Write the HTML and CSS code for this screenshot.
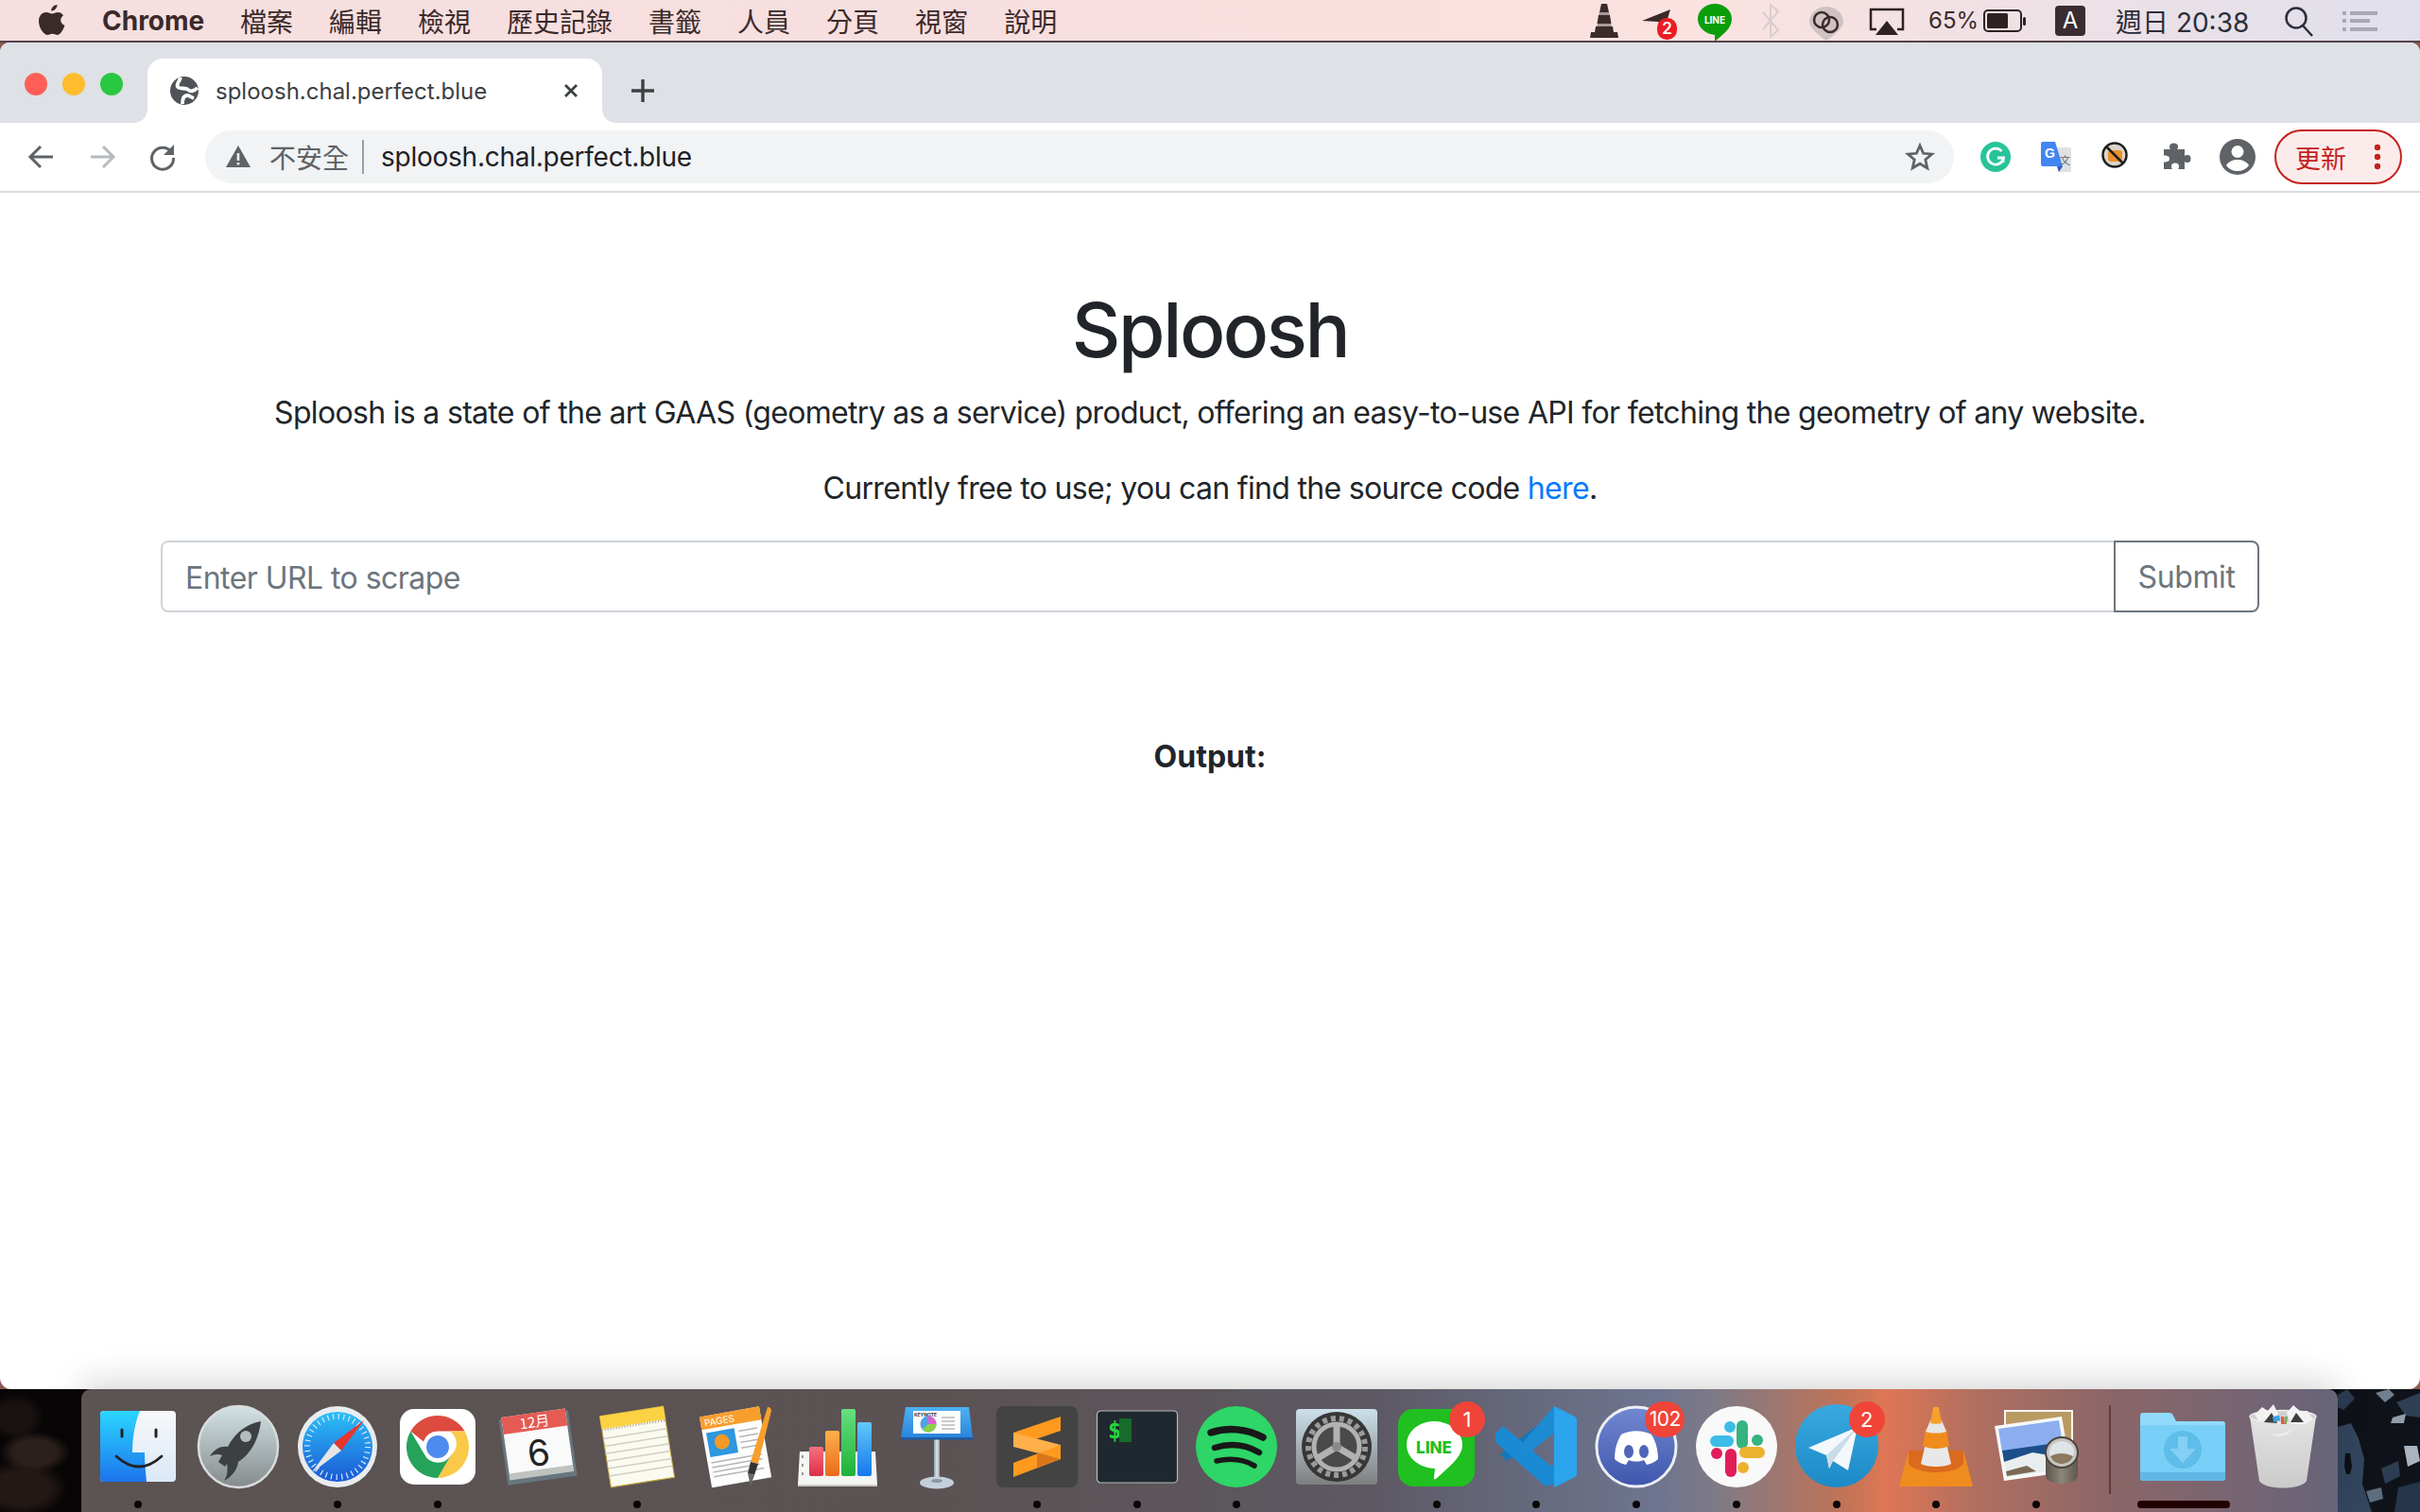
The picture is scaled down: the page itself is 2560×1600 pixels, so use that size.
FILE: index.html
```html
<!DOCTYPE html>
<html lang="zh-Hant">
<head>
  <meta charset="UTF-8">
  <title>Sploosh</title>
  <link rel="stylesheet" href="styles.css">
</head>
<body>
  <header class="menubar">
    <svg class="apple" width="30" height="34" viewBox="0 0 30 34"><path fill="#3b2a2a" d="M20.5 0c.3 3-2.700 6.800-6.300 6.500C13.800 3.400 17 .3 20.500 0zM27 11.500c-4.200 2.500-3.500 8.500 1.500 10.500-1.500 4-4.500 10-8 10-1.800 0-3-1.200-5-1.200s-3.300 1.200-5 1.200C6.500 32 1 24.500 1 17.500 1 11 5 8 9 8c2.300 0 4.300 1.500 6 1.500S19 8 21.500 8c2 0 4.200 1 5.500 3.500z"/></svg>
    <span class="app-name">Chrome</span>
    <nav class="menus">
      <span>檔案</span><span>編輯</span><span>檢視</span><span>歷史記錄</span><span>書籤</span><span>人員</span><span>分頁</span><span>視窗</span><span>說明</span>
    </nav>
    <div class="status">
      <svg width="56" height="44" viewBox="0 0 56 44"><path fill="#3b2a2a" d="M25 4h6l2 9H23zM22 16h12l1.500 9h-15zM19 28h18l1 6h4l1 6H13l1-6h4z"/><path fill="#a89a9a" d="M23 13h10l1 3H22zM21 25h14l1 3H20z"/></svg>
      <div class="status-slot plane">
        <svg width="60" height="44" viewBox="0 0 60 44"><path fill="#3b2a2a" d="M12 22L42 10l-6 20-7-7z"/></svg>
        <span class="plane-badge">2</span>
      </div>
      <svg width="58" height="44" viewBox="0 0 58 44"><path fill="#0a9e0a" d="M29 4c10 0 18 7 18 16 0 10-9 16-18 24v-7C19 36 11 29 11 20 11 11 19 4 29 4z"/><text x="29" y="25" class="line-mini">LINE</text></svg>
      <svg width="60" height="44" viewBox="0 0 60 44"><path fill="none" stroke="#d9cdd0" stroke-width="2" d="M22 13l16 19-8 7V5l8 7-16 19"/></svg>
      <svg width="61" height="44" viewBox="0 0 61 44"><path fill="#cfc2c2" d="M29 7c10 0 18 7 18 16 0 6-9 14-18 20C20 37 11 29 11 23 11 14 19 7 29 7z"/><g fill="none" stroke="#3b2a2a" stroke-width="2.500"><circle cx="24" cy="21" r="8"/><circle cx="33" cy="26" r="8"/></g></svg>
      <svg width="64" height="44" viewBox="0 0 64 44"><path fill="none" stroke="#2d2222" stroke-width="2.500" d="M21 31h-6V10h34v21h-6"/><path fill="#2d2222" d="M32 22l12 15H20z"/></svg>
      <span class="status-pct">65%</span>
      <svg width="56" height="44" viewBox="0 0 56 44"><rect x="5" y="11" width="39" height="22" rx="4" fill="none" stroke="#2d2222" stroke-width="2"/><rect x="8" y="14" width="22" height="16" rx="1.500" fill="#2d2222"/><rect x="46" y="18" width="3" height="9" rx="1.500" fill="#2d2222"/></svg>
      <div class="input-slot"><span class="input-key">A</span></div>
      <span class="status-clock">週日 20:38</span>
      <svg width="67" height="44" viewBox="0 0 67 44"><circle cx="31" cy="19" r="10.500" fill="none" stroke="#2d2d3a" stroke-width="2.500"/><path stroke="#2d2d3a" stroke-width="2.500" d="M38 27l10 11"/></svg>
      <svg width="65" height="44" viewBox="0 0 65 44"><path fill="#a8a8b8" d="M13 12h4v4h-4zM21 12h29v4H21zM13 20h4v4h-4zM21 20h21v4H21zM13 29h4v4h-4zM21 29h29v4H21z"/></svg>
    </div>
  </header>

  <main class="window">
    <div class="tabstrip">
      <div class="traffic">
        <span class="light red"></span><span class="light yellow"></span><span class="light green"></span>
      </div>
      <div class="tab">
        <svg width="30" height="30" viewBox="0 0 30 30"><circle cx="15" cy="15" r="15" fill="#4f5358"/><g fill="none" stroke="#fff" stroke-width="3.800"><path d="M11 1C10 5 6 8 8 11c3 3 8 0 11 3 2 2 6 2 10-2"/><path d="M13 29c0-5 1-9 5-9 3 0 4 2 7 3"/></g></svg>
        <span class="tab-title">sploosh.chal.perfect.blue</span>
        <svg class="tab-close" width="26" height="26" viewBox="0 0 26 26"><path stroke="#3c4043" stroke-width="2.800" d="M7 7l12 12M19 7L7 19"/></svg>
      </div>
      <svg class="newtab" width="28" height="28" viewBox="0 0 28 28"><path stroke="#3c4043" stroke-width="3.400" d="M14 2v24M2 14h24"/></svg>
    </div>

    <div class="toolbar">
      <button class="tool"><svg width="32" height="32" viewBox="0 0 32 32"><path fill="none" stroke="#5f6368" stroke-width="3" d="M28 16H5M15 5L4 16l11 11"/></svg></button>
      <button class="tool"><svg width="32" height="32" viewBox="0 0 32 32"><path fill="none" stroke="#b6b9bd" stroke-width="3" d="M4 16h23M17 5l11 11-11 11"/></svg></button>
      <button class="tool"><svg width="32" height="32" viewBox="0 0 32 32"><path fill="none" stroke="#5f6368" stroke-width="3" d="M26 12A11.500 11.500 0 1 0 27.500 17"/><path fill="#5f6368" d="M28 3v11H17z"/></svg></button>
      <div class="omnibox">
        <svg width="30" height="30" viewBox="0 0 30 30"><path fill="#5f6368" d="M15 3l13 23H2z"/><path fill="#f1f3f4" d="M13.700 11h2.600v8h-2.600zM13.700 21h2.600v2.600h-2.600z"/></svg>
        <span class="not-secure">不安全</span>
        <span class="omni-sep"></span>
        <span class="omni-url">sploosh.chal.perfect.blue</span>
        <svg class="omni-star" width="32" height="32" viewBox="0 0 32 32"><path fill="none" stroke="#5f6368" stroke-width="2.800" d="M16 4l3.600 8.300 9 .8-6.800 5.900 2 8.800L16 23.200 8.200 27.800l2-8.800-6.800-5.900 9-.8z"/></svg>
      </div>
      <div class="extensions">
        <button class="tool"><svg width="32" height="32" viewBox="0 0 32 32"><circle cx="16" cy="16" r="16" fill="#27c49a"/><path fill="none" stroke="#fff" stroke-width="2.800" d="M22.500 10A8.500 8.500 0 1 0 24.500 17H18"/><path stroke="#fff" stroke-width="2.800" d="M24 16v6"/></svg></button>
        <button class="tool"><svg width="32" height="32" viewBox="0 0 32 32"><path fill="#dfe1e3" d="M14 6h16a2 2 0 0 1 2 2v22a2 2 0 0 1-2 2H18z"/><path fill="#4285f4" d="M2 0h13l8 26H2a2 2 0 0 1-2-2V2a2 2 0 0 1 2-2z"/><path fill="#2f5fc0" d="M17 26h6l-4 6z"/><text x="4" y="17" class="translate-g">G</text><text x="20" y="24" class="translate-wen">文</text></svg></button>
        <button class="tool"><svg class="ext-nope" width="28" height="28" viewBox="0 0 28 28"><circle cx="14" cy="14" r="12.500" fill="#d9d4cc" stroke="#1e1e1e" stroke-width="2.500"/><rect x="7" y="9" width="15" height="12" rx="3" fill="#ee8f2b"/><path stroke="#1e1e1e" stroke-width="2.500" d="M5 5l18 18"/></svg></button>
        <button class="tool"><svg width="30" height="28" viewBox="0 0 30 28"><path fill="#5f6368" d="M1 6h7c-1-1-1-2-1-3a4.500 3.500 0 0 1 9 0c0 1 0 2-1 3h8v7c1-1 2-1 3-1a3.500 4 0 0 1 0 8c-1 0-2 0-3-1v8h-7c1-1 1-2 1-3a4 3.500 0 0 0-8 0c0 1 0 2 1 3H1v-8c1 1 2 1 3 0a3 3 0 0 0 0-6c-1-1-2-1-3 0z"/></svg></button>
        <button class="tool"><svg width="38" height="38" viewBox="0 0 38 38"><circle cx="19" cy="19" r="19" fill="#5f6368"/><circle cx="19" cy="13.500" r="6.500" fill="#fff"/><path fill="#fff" d="M7 28c3-5 8-6 12-6s9 1 12 6c-3 4-7 6-12 6s-9-2-12-6z"/></svg></button>
      </div>
      <div class="update-btn">
        <span>更新</span>
        <svg width="8" height="30" viewBox="0 0 8 30"><g fill="#c5221f"><circle cx="4" cy="5" r="3.200"/><circle cx="4" cy="15" r="3.200"/><circle cx="4" cy="25" r="3.200"/></g></svg>
      </div>
    </div>

    <div class="page">
      <h1>Sploosh</h1>
      <p>Sploosh is a state of the art GAAS (geometry as a service) product, offering an easy-to-use API for fetching the geometry of any website.</p>
      <p class="last-line">Currently free to use; you can find the source code <a href="#">here</a>.</p>
      <form class="input-group">
        <input type="text" placeholder="Enter URL to scrape">
        <button type="button">Submit</button>
      </form>
      <div class="output-label">Output:</div>
    </div>
  </main>

  <footer class="desktop">
    <div class="wall wall-left"></div>
    <div class="dock">
      <div class="dock-item">
        <svg width="88" height="88" viewBox="0 0 88 88"><defs><linearGradient id="fb" x1="0" y1="0" x2="0" y2="1"><stop offset="0" stop-color="#2ad6ff"/><stop offset="1" stop-color="#1d74ee"/></linearGradient><linearGradient id="fw" x1="0" y1="0" x2="0" y2="1"><stop offset="0" stop-color="#f7f8f9"/><stop offset="1" stop-color="#dbe8f6"/></linearGradient></defs><rect x="4" y="6" width="80" height="75" rx="4" fill="url(#fw)"/><path fill="url(#fb)" d="M8 6h38c-5 12-8 28-8 44h13c0 10 1 21 2 31H8a4 4 0 0 1-4-4V10a4 4 0 0 1 4-4z"/><path stroke="#222" stroke-width="3" stroke-linecap="round" d="M27 26v7M63 26v7"/><path fill="none" stroke="#222" stroke-width="2.800" stroke-linecap="round" d="M21 54q24 22 48 0"/></svg>
        <span class="dot"></span>
      </div>
      <div class="dock-item">
        <svg width="88" height="88" viewBox="0 0 88 88"><defs><linearGradient id="rk" x1="0" y1="0" x2="0" y2="1"><stop offset="0" stop-color="#d2e2e6"/><stop offset="1" stop-color="#858b8c"/></linearGradient></defs><ellipse cx="44" cy="44" rx="42" ry="43" fill="url(#rk)" stroke="#d8dcdc" stroke-width="2.500"/><path fill="#3c4040" d="M68 17C52 20 40 30 33 44c-7-1-14 2-19 10 4-2 9-3 13-1l-4 7 7 5 2-3c1 6 1 12-3 18 9-5 14-12 15-20 14-9 22-25 24-43z"/><circle cx="52" cy="33" r="6" fill="#b4bcbe"/></svg>
        <span class="dot off"></span>
      </div>
      <div class="dock-item">
        <svg width="88" height="88" viewBox="0 0 88 88"><defs><linearGradient id="sf" x1="0" y1="0" x2="0" y2="1"><stop offset="0" stop-color="#2cc0f8"/><stop offset="1" stop-color="#1a58d4"/></linearGradient></defs><ellipse cx="44" cy="44" rx="42" ry="43" fill="#e9ecef"/><circle cx="44" cy="44" r="37" fill="url(#sf)"/><circle cx="44" cy="44" r="32" fill="none" stroke="#d6ebff" stroke-width="6" stroke-dasharray="1.200 4.400"/><path fill="#e8352c" d="M72 16L40 40l8 8z"/><path fill="#e6e6e6" d="M16 72l24-32 8 8z"/></svg>
        <span class="dot"></span>
      </div>
      <div class="dock-item">
        <svg width="88" height="88" viewBox="0 0 88 88"><rect x="4" y="4" width="80" height="80" rx="15" fill="#fff"/><path fill="#dc4b3e" d="M44 11a33 33 0 0 1 28.600 16.500H44a16 16 0 0 0-15 11L15.400 27.500A33 33 0 0 1 44 11z"/><path fill="#fbc94a" d="M72.600 27.500A33 33 0 0 1 44 77l14-24a16 16 0 0 0-1-25.500z"/><path fill="#25a35a" d="M15.400 27.500L30 52a16 16 0 0 0 28 1L44 77a33 33 0 0 1-28.600-49.500z"/><circle cx="44" cy="44" r="15" fill="#fff"/><circle cx="44" cy="44" r="12" fill="#4e8bf0"/></svg>
        <span class="dot"></span>
      </div>
      <div class="dock-item">
        <svg width="88" height="88" viewBox="0 0 88 88"><g transform="rotate(-8 44 44)"><rect x="7" y="10" width="74" height="70" fill="#67767e"/><rect x="10" y="8" width="68" height="66" fill="#fafafa"/><rect x="10" y="68" width="68" height="7" fill="#bfc3bf"/><rect x="10" y="8" width="68" height="18" fill="#e55b54"/><text x="44" y="23" class="cal-month">12月</text><text x="44" y="64" class="cal-day">6</text></g></svg>
        <span class="dot off"></span>
      </div>
      <div class="dock-item">
        <svg width="88" height="88" viewBox="0 0 88 88"><g transform="rotate(-9 44 44)"><rect x="10" y="6" width="68" height="76" fill="#fbfaf0" stroke="#c9a93c" stroke-width="1"/><rect x="10" y="6" width="68" height="14" fill="#fbd243"/><path stroke="#cfcfc8" stroke-width="1.500" d="M10 30h68M10 38h68M10 46h68M10 54h68M10 62h68M10 70h68"/><path stroke="#999" stroke-width="2" stroke-dasharray="1 2" d="M10 21h68"/></g></svg>
        <span class="dot"></span>
      </div>
      <div class="dock-item">
        <svg width="88" height="88" viewBox="0 0 88 88"><g transform="rotate(-10 44 44)"><rect x="10" y="6" width="64" height="76" fill="#fdfdfd"/><rect x="10" y="6" width="64" height="14" fill="#f89e2d"/><text x="14" y="17" class="pages-label">PAGES</text><rect x="14" y="24" width="30" height="26" fill="#2e97df"/><circle cx="29" cy="36" r="8" fill="#f59a26"/><path stroke="#b5b5b5" stroke-width="1.500" d="M14 56h54M14 61h54M14 66h50M14 71h54M48 28h20M48 34h20M48 40h20M48 46h20"/></g><path fill="#f89e2d" d="M76 2c3 0 4 2 4 4L66 62l-8-2z"/><path fill="#333" d="M58 60l8 2-4 12-7-2z"/><path fill="#666" d="M55 72l7 2-4 12z"/></svg>
        <span class="dot off"></span>
      </div>
      <div class="dock-item">
        <svg width="88" height="88" viewBox="0 0 88 88"><defs><linearGradient id="nr" x1="0" y1="0" x2="0" y2="1"><stop offset="0" stop-color="#f6707f"/><stop offset="1" stop-color="#dc2f47"/></linearGradient><linearGradient id="no" x1="0" y1="0" x2="0" y2="1"><stop offset="0" stop-color="#fdb04a"/><stop offset="1" stop-color="#ea6a1e"/></linearGradient><linearGradient id="ng" x1="0" y1="0" x2="0" y2="1"><stop offset="0" stop-color="#66e07e"/><stop offset="1" stop-color="#1fb03a"/></linearGradient><linearGradient id="nb" x1="0" y1="0" x2="0" y2="1"><stop offset="0" stop-color="#62c8fa"/><stop offset="1" stop-color="#1578ee"/></linearGradient></defs><path fill="#f5f5f3" d="M4 49h80l2 35H2z"/><path fill="#c9c9c4" d="M2 84h84v2H2z"/><path stroke="#9a9a98" stroke-width="2" stroke-dasharray="3 6" d="M7 53v27"/><rect x="14" y="44" width="15" height="31" rx="2" fill="url(#nr)"/><rect x="31" y="27" width="15" height="48" rx="2" fill="url(#no)"/><rect x="48" y="4" width="15" height="71" rx="2" fill="url(#ng)"/><rect x="65" y="18" width="15" height="57" rx="2" fill="url(#nb)"/></svg>
        <span class="dot off"></span>
      </div>
      <div class="dock-item">
        <svg width="88" height="88" viewBox="0 0 88 88"><defs><linearGradient id="kn" x1="0" y1="0" x2="0" y2="1"><stop offset="0" stop-color="#4eb2f2"/><stop offset="1" stop-color="#2a85dc"/></linearGradient><linearGradient id="ks" x1="0" y1="0" x2="1" y2="0"><stop offset="0" stop-color="#8f9da8"/><stop offset=".5" stop-color="#e0e6ea"/><stop offset="1" stop-color="#8f9da8"/></linearGradient></defs><rect x="41" y="36" width="6" height="42" fill="url(#ks)"/><ellipse cx="44" cy="82" rx="18" ry="6.500" fill="#c3d0da"/><ellipse cx="44" cy="80" rx="6" ry="2" fill="#8a98a4"/><path fill="url(#kn)" d="M11 2h67l4 32H6z"/><path fill="#1c5ca6" d="M6 34h76v2.500H6z"/><path fill="#fdfdfd" d="M19 6h50v24H19z"/><text x="32" y="12" class="keynote-label">KEYNOTE</text><circle cx="35" cy="20" r="8.500" fill="#4da4e8"/><path fill="#e060d0" d="M35 20v-8.500a8.500 8.500 0 0 1 8.500 8.500z"/><path fill="#8ad04a" d="M35 20h8.500a8.500 8.500 0 0 1-15 5.500z"/><path stroke="#b8b8b8" stroke-width="1.500" d="M49 13h14M49 17h14M49 21h14M49 25h14"/></svg>
        <span class="dot off"></span>
      </div>
      <div class="dock-item">
        <svg width="88" height="88" viewBox="0 0 88 88"><rect x="1" y="1" width="86" height="86" rx="7" fill="#434343"/><path fill="#ff9a1f" d="M69 12v15L19 44V29z"/><path fill="#ffb04a" d="M19 29v15l50 13V42z"/><path fill="#ff9a1f" d="M69 42v15L19 76V61z"/><path fill="#d9761a" d="M44 50l25 7-25 9z"/></svg>
        <span class="dot"></span>
      </div>
      <div class="dock-item">
        <svg width="88" height="88" viewBox="0 0 88 88"><rect x="1.500" y="6" width="85" height="76" rx="4" fill="#20282f" stroke="#b6bcc0" stroke-width="1.200"/><text x="13" y="35" class="term-prompt">$</text><rect x="25" y="14" width="13" height="25" fill="#176b2b"/></svg>
        <span class="dot"></span>
      </div>
      <div class="dock-item">
        <svg width="88" height="88" viewBox="0 0 88 88"><ellipse cx="44" cy="44" rx="43" ry="43" fill="#2ed567"/><g fill="none" stroke="#181818" stroke-linecap="round"><path stroke-width="7.500" d="M17 29c18-6 38-4 55 5"/><path stroke-width="6.500" d="M21 45c16-5 33-3 47 5"/><path stroke-width="5.500" d="M23 59c14-3 28-2 40 5"/></g></svg>
        <span class="dot"></span>
      </div>
      <div class="dock-item">
        <svg width="88" height="88" viewBox="0 0 88 88"><defs><linearGradient id="sp" x1="0" y1="0" x2="0" y2="1"><stop offset="0" stop-color="#cde0ea"/><stop offset="1" stop-color="#7d7f80"/></linearGradient></defs><rect x="1" y="4" width="86" height="80" rx="4" fill="url(#sp)"/><circle cx="44" cy="44" r="37" fill="#373737"/><circle cx="44" cy="44" r="30" fill="none" stroke="#9a9a9a" stroke-width="6" stroke-dasharray="5 4"/><circle cx="44" cy="44" r="24" fill="#4a4a4a" stroke="#b2b2b2" stroke-width="5"/><g stroke="#b2b2b2" stroke-width="7"><path d="M44 44V21M44 44L24 56M44 44l20 12"/></g><circle cx="44" cy="44" r="5" fill="#8a8a8a"/></svg>
        <span class="dot off"></span>
      </div>
      <div class="dock-item">
        <svg width="88" height="88" viewBox="0 0 88 88"><rect x="3" y="4" width="81" height="82" rx="16" fill="#1fc01f"/><path fill="#fff" d="M41 17c17 0 30 11 30 25 0 11-10 20-27 35-2 2-4 2-3-1l1-9c-18-1-30-12-30-25 0-14 13-25 29-25z"/><text x="41" y="51" class="line-word">LINE</text></svg>
        <span class="dock-badge badge-line">1</span>
        <span class="dot"></span>
      </div>
      <div class="dock-item">
        <svg width="88" height="88" viewBox="0 0 88 88"><path fill="#1277bb" d="M6 52l7 7 19-15 12-14V22z"/><path fill="#1a8ad4" d="M1 30l8-8 50 42 6-2 0 20-11 4L1 39z"/><path fill="#2aa5ee" d="M63 1l22 11c1 1 2 2 2 3v58c0 1-1 2-2 3L63 87z"/><path fill="#1c8bd2" d="M63 1v28L35 52 26 44z"/></svg>
        <span class="dot"></span>
      </div>
      <div class="dock-item">
        <svg width="88" height="88" viewBox="0 0 88 88"><defs><linearGradient id="dc" x1="0" y1="0" x2="0" y2="1"><stop offset="0" stop-color="#7288d2"/><stop offset="1" stop-color="#3f56ac"/></linearGradient></defs><circle cx="44" cy="44" r="42" fill="url(#dc)" stroke="#eceef4" stroke-width="3"/><path fill="#fff" d="M28 31c10-5 22-5 32 0 5 8 7 17 7 26-3 3-7 5-12 6l-3-5c-5 2-11 2-16 0l-3 5c-5-1-9-3-12-6 0-9 2-18 7-26z"/><ellipse cx="36" cy="49" rx="5" ry="7" fill="#4f66b8"/><ellipse cx="52" cy="49" rx="5" ry="7" fill="#4f66b8"/></svg>
        <span class="dock-badge badge-discord">102</span>
        <span class="dot"></span>
      </div>
      <div class="dock-item">
        <svg width="88" height="88" viewBox="0 0 88 88"><circle cx="44" cy="44" r="43" fill="#f9f9f9"/><g fill="none" stroke-linecap="round" stroke-width="12"><path stroke="#3ebce8" d="M22 38h13"/><path stroke="#36b37e" d="M50 22v18"/><path stroke="#e01e5a" d="M38 52v18"/><path stroke="#ecb22e" d="M53 50h15"/></g><circle cx="37" cy="23" r="6" fill="#3ebce8"/><circle cx="66" cy="37" r="6" fill="#36b37e"/><circle cx="23" cy="51" r="6" fill="#e01e5a"/><circle cx="51" cy="66" r="6" fill="#ecb22e"/></svg>
        <span class="dot"></span>
      </div>
      <div class="dock-item">
        <svg width="88" height="88" viewBox="0 0 88 88"><defs><linearGradient id="tg" x1="0" y1="0" x2="0" y2="1"><stop offset="0" stop-color="#39a9e0"/><stop offset="1" stop-color="#1c8ac6"/></linearGradient></defs><ellipse cx="44" cy="43" rx="44" ry="44" fill="url(#tg)"/><path fill="#f3f8fc" d="M14 45l52-22-10 46-16-10-4 8-3-14z"/><path fill="#c9dcea" d="M33 53l33-30-26 36-4 8z"/></svg>
        <span class="dock-badge badge-telegram">2</span>
        <span class="dot"></span>
      </div>
      <div class="dock-item">
        <svg width="88" height="88" viewBox="0 0 88 88"><path fill="#f08c1e" d="M5 86l10-38h58l10 38z"/><path fill="#db6a1e" d="M15 48h58v14c-8 12-50 12-58 0z"/><path fill="#e8e8e8" d="M28 62c6 4 26 4 32 0l-6-26H34z"/><path fill="#f08c1e" d="M30 43c8 4 20 4 28 0l-3-18H33z"/><path fill="#e6e6e6" d="M33 28c6 2 16 2 22 0l-5-12H38z"/><path fill="#f5a02a" d="M38 19c3 1 9 1 12 0l-3-17h-6z"/></svg>
        <span class="dot"></span>
      </div>
      <div class="dock-item">
        <svg width="88" height="88" viewBox="0 0 88 88"><defs><linearGradient id="lp" x1="0" y1="0" x2="1" y2="0"><stop offset="0" stop-color="#5a544c"/><stop offset=".5" stop-color="#8d8679"/><stop offset="1" stop-color="#5f574e"/></linearGradient></defs><rect x="11" y="6" width="71" height="46" fill="#b99a62" stroke="#f6f6f6" stroke-width="2"/><path fill="#f8f8f8" d="M0 22l71-10 10 58-71 10z"/><path fill="#8caef0" d="M4 25l64-9 4 25-64 9z"/><path fill="#1c4f8a" d="M8 48l64-9 2 12-64 9z"/><path fill="#e8eeee" d="M10 60l30-10 36 6 1 11-64 9z"/><path fill="#7a6a55" d="M12 70l22-6 10 6-31 5z"/><path fill="url(#lp)" d="M54 50h34v24c0 6-8 9-17 9s-17-3-17-9z"/><ellipse cx="71" cy="50" rx="17" ry="16" fill="#c6c4be" stroke="#4a453e" stroke-width="2"/><ellipse cx="71" cy="50" rx="13" ry="12" fill="#dfe4e8"/><path fill="#8c7a5e" d="M59 54c7-4 16-4 24 0-2 6-8 8-12 8s-10-2-12-8z"/></svg>
        <span class="dot"></span>
      </div>
      <div class="dock-sep"></div>
      <div class="dock-item">
        <svg width="88" height="88" viewBox="0 0 88 88"><path fill="#92dafc" d="M-2 11c0-2 1-3 3-3h28c2 0 3 1 4 3l3 6h49c2 0 3 1 3 3v57c0 2-1 3-3 3H1c-2 0-3-1-3-3z"/><path fill="#78cff8" d="M-2 21h90v52H-2z"/><path fill="#62b6e6" d="M-2 71h90v6c0 2-1 3-3 3H1c-2 0-3-1-3-3z"/><circle cx="43" cy="47" r="20" fill="#5fbde9"/><path fill="#84cff5" d="M38 33h10v13h9L43 61 29 46h9z"/></svg>
        <span class="dot wide"></span>
      </div>
      <div class="dock-item">
        <svg width="88" height="88" viewBox="0 0 88 88"><defs><linearGradient id="tr" x1="0" y1="0" x2="0" y2="1"><stop offset="0" stop-color="#e4e4e4"/><stop offset="1" stop-color="#cbcaca"/></linearGradient></defs><path fill="url(#tr)" d="M9 12l10 68c5 10 45 10 50 0l10-68z"/><ellipse cx="44" cy="12" rx="35" ry="6.500" fill="#cfcfcf" stroke="#eee" stroke-width="1.500"/><path fill="#f2f2f2" d="M14 10l8-8 6 4 6-7 5 10-6 7H18zM48 8l7-8 7 6 8 0 6 9-8 5H52z"/><path fill="#3d3d3d" d="M24 18l8-10 6 11zM52 18l6-10 8 10z"/><path fill="#3aa0e0" d="M33 12l7-1 1 5-7 2z"/><path fill="#dd5a4a" d="M42 12h3l1 8h-4z"/><path fill="#5fb85f" d="M46 12h3l-1 8h-2z"/><path fill="#f4f4f4" opacity=".6" d="M30 30c8 2 18 0 24-6-2 8-14 12-24 6z"/></svg>
        <span class="dot off"></span>
      </div>
    </div>
    <div class="wall wall-right">
      <svg width="87" height="130" viewBox="0 0 87 130">
        <path fill="#2c3d52" d="M0 6L10 0l8 10-12 12-6-3zM46 84l18-8 2 16-16 8z"/>
        <path fill="#33465e" d="M0 40l14-4 8 16 6 22-2 26 10 30H0z"/>
        <path fill="#6f7f90" d="M40 4L54 0l6 6-10 8z"/>
        <path fill="#2e3f55" d="M62 14L87 4v26l-15-2z"/>
        <path fill="#8f9cab" d="M58 30l14-4-2 10-14 0z"/>
        <path fill="#a9b4c0" d="M70 60h14l3 16-13 6z"/>
        <path fill="#5d6d80" d="M30 108l16-4 2 12-14 4z"/>
        <path fill="#26364a" d="M64 104l23-6v32H60z"/>
        <path fill="#0b1016" d="M8 68h5l2 14-2 8h-4l-2-8z"/>
      </svg>
    </div>
  </footer>
</body>
</html>
```

FILE: styles.css
```css
* {
  box-sizing: border-box;
}

html, body {
  margin: 0;
  height: 100%;
}

body {
  height: 100vh;
  display: flex;
  flex-direction: column;
  overflow: hidden;
  background-color: #8c5a52;
  font-family: "Inter", "Noto Sans CJK TC", sans-serif;
}

svg {
  display: block;
  flex-shrink: 0;
  overflow: visible;
}

/* mac menu bar */
.menubar {
  height: 45px;
  flex-shrink: 0;
  display: flex;
  align-items: center;
  padding: 0 30px 0 40px;
  background: linear-gradient(90deg, #f6dfe0 0%, #f8dfdf 40%, #fbe2e0 70%, #e0e0ec 100%);
  border-bottom: 2px solid #54434a;
  color: #3b2a2a;
  font-size: 28px;
}

.apple {
  margin-right: 38px;
}

.app-name {
  font-weight: 700;
  font-size: 28px;
  margin-right: 38px;
  width: 108px;
  white-space: nowrap;
}

.menus {
  display: flex;
  gap: 38px;
  font-family: "Noto Sans CJK TC", sans-serif;
  font-size: 28px;
  line-height: 40px;
}

.status {
  margin-left: auto;
  display: flex;
  align-items: center;
}

.status-slot {
  position: relative;
}

.plane-badge {
  position: absolute;
  left: 28px;
  top: 19px;
  width: 21px;
  height: 23px;
  border-radius: 10px;
  background-color: #ed1c24;
  color: #fff;
  font-size: 17px;
  font-weight: 600;
  line-height: 23px;
  text-align: center;
}

.line-mini {
  font-size: 10px;
  font-weight: 700;
  fill: #fff;
  text-anchor: middle;
}

.status-pct {
  width: 66px;
  padding-left: 12px;
  font-size: 24px;
  white-space: nowrap;
}

.input-slot {
  width: 80px;
  display: flex;
  justify-content: center;
}

.input-key {
  width: 32px;
  height: 32px;
  border-radius: 4px;
  background-color: #3a2c30;
  color: #fff;
  font-size: 24px;
  line-height: 32px;
  text-align: center;
}

.status-clock {
  width: 168px;
  padding-left: 8px;
  font-size: 28px;
  white-space: nowrap;
  color: #2d2d3a;
}

/* browser window */
.window {
  flex: 1;
  min-height: 0;
  display: flex;
  flex-direction: column;
  background-color: #fff;
  border-radius: 10px 10px 12px 12px;
  overflow: hidden;
}

.tabstrip {
  height: 85px;
  flex-shrink: 0;
  display: flex;
  align-items: flex-end;
  background-color: #dee1e6;
}

.traffic {
  width: 156px;
  height: 85px;
  display: flex;
  align-items: center;
  gap: 16px;
  padding: 3px 0 0 26px;
}

.light {
  width: 24px;
  height: 24px;
  border-radius: 50%;
}

.light.red { background-color: #ff5f57; }
.light.yellow { background-color: #ffbd2e; }
.light.green { background-color: #28c840; }

.tab {
  position: relative;
  width: 481px;
  height: 68px;
  display: flex;
  align-items: center;
  gap: 18px;
  padding: 0 20px 0 24px;
  background-color: #fff;
  border-radius: 16px 16px 0 0;
  color: #3c4043;
  font-size: 24px;
}

.tab::before,
.tab::after {
  content: "";
  position: absolute;
  bottom: 0;
  width: 14px;
  height: 14px;
}

.tab::before {
  left: -14px;
  background: radial-gradient(circle at 0 0, transparent 13.5px, #fff 14px);
}

.tab::after {
  right: -14px;
  background: radial-gradient(circle at 100% 0, transparent 13.5px, #fff 14px);
}

.tab-close {
  margin-left: auto;
}

.newtab {
  margin: 0 0 20px 29px;
}

.toolbar {
  height: 74px;
  flex-shrink: 0;
  display: flex;
  align-items: center;
  padding: 0 19px 0 12px;
  border-bottom: 2px solid #dadce0;
  background-color: #fff;
}

.tool {
  width: 64px;
  height: 56px;
  padding: 0;
  border: none;
  background: none;
  display: flex;
  align-items: center;
  justify-content: center;
}

.ext-nope {
  margin: -4px 0 0 -5px;
}

.omnibox {
  flex: 1;
  height: 56px;
  margin-left: 13px;
  display: flex;
  align-items: center;
  padding: 0 20px;
  background-color: #f1f3f4;
  border-radius: 28px;
}

.not-secure {
  margin-left: 18px;
  font-family: "Noto Sans CJK TC", sans-serif;
  font-size: 28px;
  color: #5f6368;
}

.omni-sep {
  width: 2px;
  height: 36px;
  margin: 0 18px 0 14px;
  background-color: #9aa0a6;
}

.omni-url {
  font-size: 28px;
  letter-spacing: -0.25px;
  color: #202124;
}

.omni-star {
  margin-left: auto;
}

.extensions {
  display: flex;
  margin-left: 12px;
}

.translate-g {
  font-size: 14px;
  font-weight: 700;
  fill: #fff;
}

.translate-wen {
  font-family: "Noto Sans CJK TC", sans-serif;
  font-size: 11px;
  fill: #5f6368;
}

.update-btn {
  width: 135px;
  height: 58px;
  margin-left: 7px;
  display: flex;
  align-items: center;
  justify-content: space-between;
  padding: 0 20px 0 20px;
  background-color: #fbeceb;
  border: 2px solid #c5221f;
  border-radius: 29px;
  color: #c5221f;
  font-family: "Noto Sans CJK TC", sans-serif;
  font-size: 27px;
}

/* page */
.page {
  flex: 1;
  padding-top: 97px;
  text-align: center;
  color: #212529;
  font-size: 32px;
  line-height: 48px;
  letter-spacing: -0.68px;
}

.page h1 {
  margin: 0 0 16px;
  font-size: 80px;
  font-weight: 500;
  line-height: 96px;
  letter-spacing: -2.400px;
}

.page p {
  margin: 0 0 32px;
}

.page p.last-line {
  margin-bottom: 31px;
}

.page a {
  color: #007bff;
  text-decoration: none;
}

.input-group {
  width: 2220px;
  height: 76px;
  margin: 0 auto;
  display: flex;
}

.input-group input {
  flex: 1;
  height: 76px;
  padding: 2px 24px 0;
  border: 2px solid #ced4da;
  border-radius: 8px 0 0 8px;
  font-family: inherit;
  font-size: 32px;
  letter-spacing: -0.55px;
  color: #495057;
  outline: none;
}

.input-group input::placeholder {
  color: #6c757d;
  opacity: 1;
}

.input-group button {
  width: 154px;
  margin-left: -2px;
  padding: 0;
  background-color: #fff;
  border: 2px solid #6c757d;
  border-radius: 0 8px 8px 0;
  color: #6c757d;
  font-family: inherit;
  font-size: 32px;
  letter-spacing: -0.4px;
}

.output-label {
  margin-top: 129px;
  font-weight: 700;
  letter-spacing: 0;
}

/* desktop and dock */
.desktop {
  height: 130px;
  flex-shrink: 0;
  display: flex;
  position: relative;
  background-color: #0d0a0a;
}

.wall {
  height: 130px;
  flex-shrink: 0;
}

.wall-left {
  width: 86px;
  background:
    radial-gradient(ellipse 38px 22px at 37px 67px, #2c201c 60%, transparent),
    radial-gradient(ellipse 30px 26px at 17px 30px, #181110 60%, transparent),
    radial-gradient(ellipse 50px 30px at 23px 105px, #221815 60%, transparent),
    #070505;
}

.wall-right {
  width: 87px;
  background-color: #0f1319;
  overflow: hidden;
}

.dock {
  position: relative;
  flex: 1;
  display: flex;
  padding: 17px 0 0 7px;
  border-radius: 10px 10px 0 0;
  background: linear-gradient(90deg, #5c5353 0%, #5b5253 38%, #5d5862 57%, #646779 63%, #6f7590 70%, #7f7a85 72.500%, #c07358 78%, #de7655 80%, #b06f60 84%, #8b6668 90%, #676479 100%);
  box-shadow: 0 -8px 36px rgba(0, 0, 0, 0.16);
}

.dock-item {
  position: relative;
  width: 105.700px;
  flex-shrink: 0;
  display: flex;
  flex-direction: column;
  align-items: center;
}

.dot {
  width: 8px;
  height: 8px;
  margin-top: 13px;
  border-radius: 50%;
  background-color: #0a0505;
}

.dot.off {
  visibility: hidden;
}

.dot.wide {
  width: 98px;
  border-radius: 4px;
  background-color: #210000;
}

.dock-sep {
  width: 50px;
  flex-shrink: 0;
  display: flex;
  justify-content: center;
}

.dock-sep::before {
  content: "";
  width: 2px;
  height: 94px;
  background-color: #5e3c3c;
}

.dock-badge {
  position: absolute;
  top: -4px;
  height: 38px;
  min-width: 38px;
  padding: 0 4px;
  border-radius: 19px;
  background-color: #f04438;
  color: #fff;
  font-size: 22px;
  line-height: 38px;
  text-align: center;
}

.badge-line { left: 66px; }
.badge-discord { left: 62px; min-width: 42px; font-size: 21px; padding: 0; width: 42px; letter-spacing: -0.5px; }
.badge-telegram { left: 66px; }

.cal-month {
  font-size: 15px;
  fill: #fff;
  text-anchor: middle;
  font-family: "Noto Sans CJK TC", sans-serif;
}

.cal-day {
  font-size: 38px;
  fill: #222;
  text-anchor: middle;
}

.pages-label {
  font-size: 10px;
  fill: #fff;
}

.keynote-label {
  font-size: 5px;
  font-weight: 700;
  fill: #333;
  text-anchor: middle;
}

.term-prompt {
  font-family: "DejaVu Sans Mono", monospace;
  font-size: 24px;
  font-weight: 700;
  fill: #25d63f;
}

.line-word {
  font-size: 17px;
  font-weight: 800;
  fill: #1fc01f;
  text-anchor: middle;
}
```
